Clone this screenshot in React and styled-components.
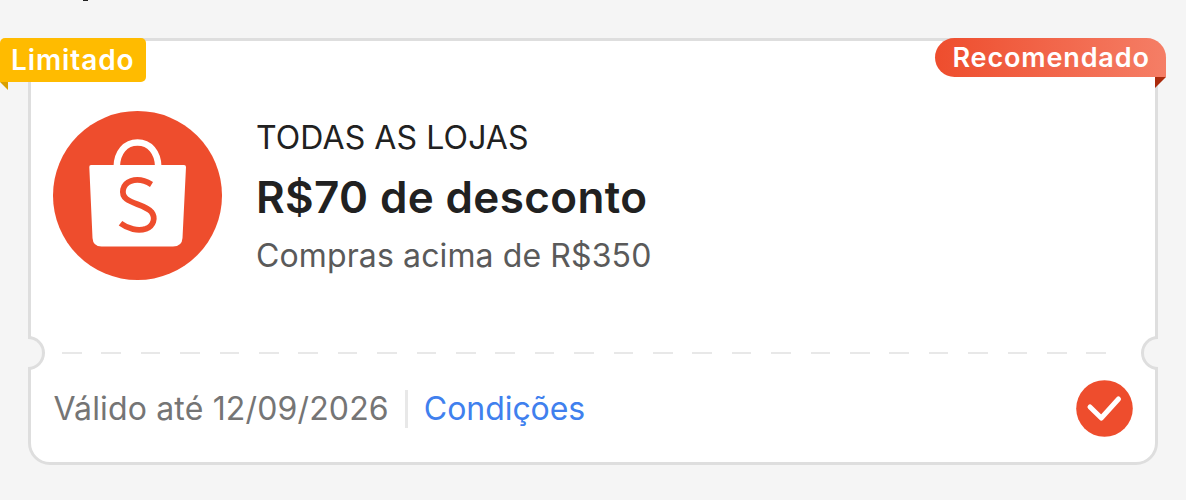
import React from "react";
import styled, { createGlobalStyle } from "styled-components";

function App() {
  return (
    <>
      <GlobalStyle />
      <Page>
        <HeadingTail />
        <Coupon>
          <LimitedBadge>
            <BadgeText $size="28px" $spacing="0.9px">
              Limitado
            </BadgeText>
          </LimitedBadge>
          <RecommendedBadge>
            <BadgeText $size="27px" $spacing="0.85px">
              Recomendado
            </BadgeText>
          </RecommendedBadge>

          <CouponBody>
            <StoreLogo />
            <CouponInfo>
              <StoreName>TODAS AS LOJAS</StoreName>
              <Discount>R$70 de desconto</Discount>
              <MinimumOrder>Compras acima de R$350</MinimumOrder>
            </CouponInfo>
          </CouponBody>

          <TearLine>
            <Notch $side="left" />
            <Dashes />
            <Notch $side="right" />
          </TearLine>

          <CouponFooter>
            <Validity>Válido até 12/09/2026</Validity>
            <Separator />
            <TermsLink href="#">Condições</TermsLink>
            <SelectedMark />
          </CouponFooter>
        </Coupon>
      </Page>
    </>
  );
}

function StoreLogo() {
  return (
    <LogoSvg viewBox="0 0 169 169">
      <circle cx="84.5" cy="84.5" r="84.5" fill="#ee4d2d" />
      <path
        d="M63.700 56 C64 41 72.500 31.500 84.500 31.500 C96.500 31.500 105 41 105.300 56"
        fill="none"
        stroke="#fff"
        strokeWidth="6.5"
      />
      <path
        d="M38 54 H131 Q133 54 133 56 L129.500 127 Q129 135.500 120 135.500 H48.500 Q40 135.500 39.500 127 L36.300 56 Q36.200 54 38 54 Z"
        fill="#fff"
      />
      <path
        d="M98.500 73.500 C92 69.500 84 68 78 70 C69 73 67.500 83.500 73.500 88 C80 93 93 94.500 98.500 101 C103 107 100.500 115 93 117.800 C85 120.500 75 118 67.500 112.300"
        fill="none"
        stroke="#ee4d2d"
        strokeWidth="5.8"
      />
    </LogoSvg>
  );
}

function SelectedMark() {
  return (
    <MarkSvg viewBox="0 0 57 57">
      <circle cx="28.5" cy="28.5" r="28.3" fill="#ee4d2d" />
      <path
        d="M14 27 L25.300 38 L42.500 19"
        fill="none"
        stroke="#fff"
        strokeWidth="5"
        strokeLinecap="round"
        strokeLinejoin="round"
      />
    </MarkSvg>
  );
}

export default App;

const GlobalStyle = createGlobalStyle`
  * {
    box-sizing: border-box;
  }

  body {
    margin: 0;
    background: #f5f5f5;
    font-family: Inter, "Open Sans", sans-serif;
    overflow: hidden;
  }
`;

const Page = styled.main`
  height: 500px;
  padding: 0 28px;
`;

/* bottom of the heading that is scrolled out of view */
const HeadingTail = styled.div`
  width: 5px;
  height: 1px;
  margin: 0 0 37px 55px;
  background: #222;
`;

const Coupon = styled.section`
  position: relative;
  width: 1130px;
  height: 427px;
  background: #fff;
  border: 3px solid #dedede;
  border-radius: 22px;
`;

const LimitedBadge = styled.div`
  position: absolute;
  top: -3px;
  left: -31px;
  width: 146px;
  height: 44px;
  padding-left: 11px;
  display: flex;
  align-items: center;
  background: #ffbb00;
  border-radius: 5px 5px 5px 0;

  &::after {
    content: "";
    position: absolute;
    top: 100%;
    left: 0;
    width: 8px;
    height: 8px;
    background: #d99f00;
    clip-path: polygon(0 0, 100% 0, 100% 100%);
  }
`;

const RecommendedBadge = styled.div`
  position: absolute;
  top: -3.5px;
  right: -11px;
  width: 231px;
  height: 39.5px;
  padding-left: 17.5px;
  display: flex;
  align-items: center;
  background: linear-gradient(90deg, #ee4d2d, #f57e66);
  border-radius: 20px 20px 0 20px;

  &::after {
    content: "";
    position: absolute;
    top: 100%;
    right: 0;
    width: 11px;
    height: 11px;
    background: #aa2a0c;
    clip-path: polygon(0 0, 100% 0, 0 100%);
  }
`;

const BadgeText = styled.span`
  color: #fff;
  font-size: ${({ $size }) => $size};
  font-weight: 600;
  line-height: 1;
  letter-spacing: ${({ $spacing }) => $spacing};
  white-space: nowrap;
`;

const CouponBody = styled.div`
  display: flex;
  height: 294px;
  padding: 69.5px 0 0 22.3px;
`;

const LogoSvg = styled.svg`
  width: 169px;
  height: 169px;
  flex: none;
`;

const CouponInfo = styled.div`
  margin: -2.5px 0 0 33.7px;
  white-space: nowrap;
`;

const StoreName = styled.div`
  font-size: 32px;
  line-height: 60px;
  letter-spacing: 0.1px;
  color: #212121;
`;

const Discount = styled.div`
  font-size: 44px;
  font-weight: 600;
  line-height: 58px;
  letter-spacing: 0.36px;
  color: #212121;
`;

const MinimumOrder = styled.div`
  font-size: 32px;
  line-height: 60px;
  letter-spacing: 0.12px;
  color: #5a5a5a;
`;

const TearLine = styled.div`
  display: flex;
  align-items: center;
  justify-content: space-between;
  height: 35px;
  margin: 0 -3px;
`;

const Notch = styled.span`
  width: 17px;
  height: 34px;
  background: #f5f5f5;
  border: 3px solid #dedede;
  ${({ $side }) =>
    $side === "left"
      ? "border-left: 0; border-radius: 0 17px 17px 0;"
      : "border-right: 0; border-radius: 17px 0 0 17px;"}
`;

const Dashes = styled.span`
  flex: 1;
  height: 2px;
  margin: 0 34px 0 17px;
  background: repeating-linear-gradient(
    90deg,
    #e8e8e8 0 19.7px,
    transparent 19.7px 39.4px
  );
`;

const CouponFooter = styled.div`
  display: flex;
  align-items: center;
  padding: 10px 22px 0 22.5px;
`;

const Validity = styled.span`
  font-size: 32px;
  letter-spacing: 0.15px;
  color: #757575;
`;

const Separator = styled.span`
  width: 3px;
  height: 38px;
  margin: 0 16px;
  background: #e8e8e8;
`;

const TermsLink = styled.a`
  font-size: 32px;
  letter-spacing: -0.05px;
  color: #4080ee;
  text-decoration: none;
`;

const MarkSvg = styled.svg`
  width: 57px;
  height: 57px;
  margin-left: auto;
`;
